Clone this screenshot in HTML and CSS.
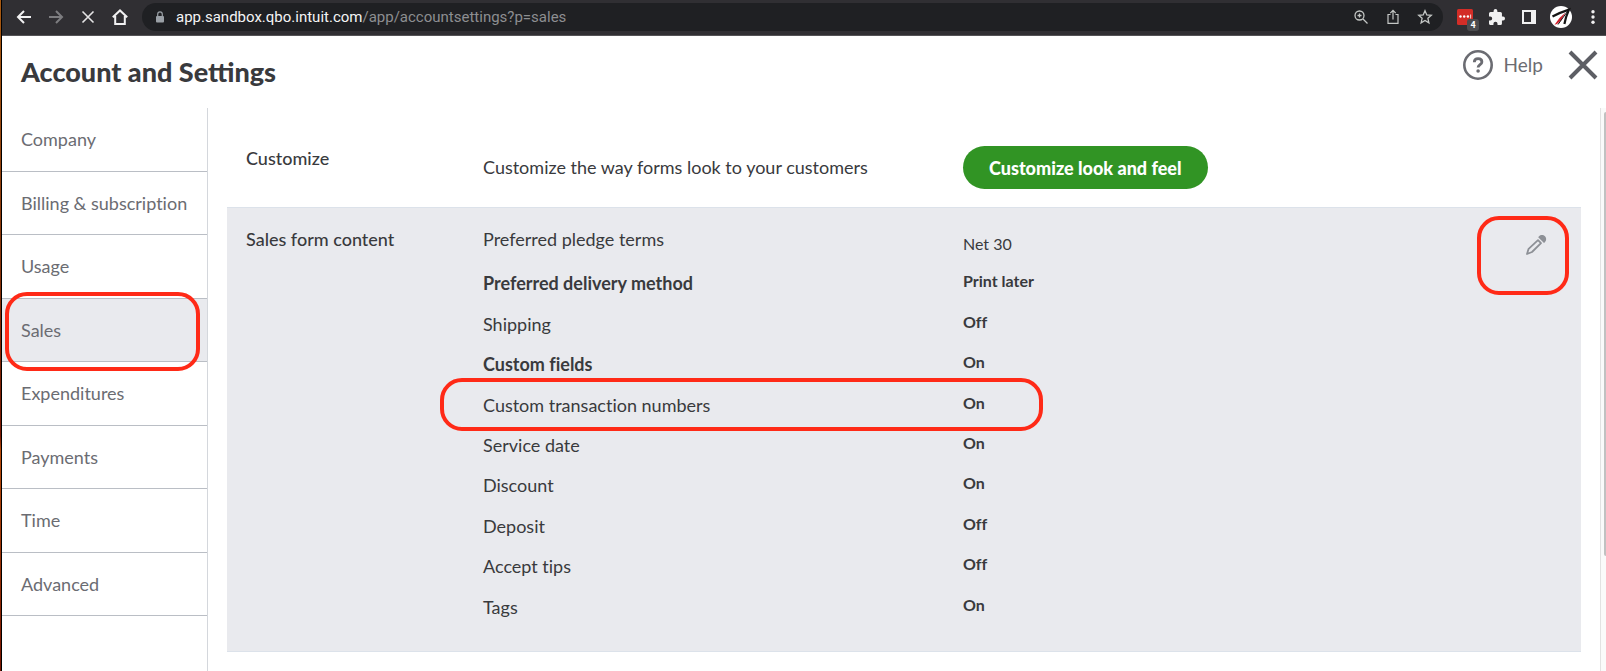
FILE: index.html
```html
<!DOCTYPE html>
<html lang="en">
<head>
<meta charset="utf-8">
<title>Account and Settings</title>
<link rel="stylesheet" href="styles.css">
</head>
<body>
<div class="window">
  <div class="toolbar">
    <div class="nav-buttons">
      <button class="tool" aria-label="Back"><svg width="16" height="16" viewBox="0 0 16 16" stroke="#f1f1f2"><path d="M15 8H2M8 2 2 8l6 6"/></svg></button>
      <button class="tool" aria-label="Forward"><svg width="16" height="16" viewBox="0 0 16 16" stroke="#7d7d80"><path d="M1 8h13M8 2l6 6-6 6"/></svg></button>
      <button class="tool" aria-label="Stop loading"><svg width="16" height="16" viewBox="0 0 16 16" stroke="#e4e4e5" stroke-width="1.600"><path d="m2.500 2.500 11 11M13.500 2.500l-11 11"/></svg></button>
      <button class="tool" aria-label="Home"><svg width="16" height="16" viewBox="0 0 16 16" stroke="#f1f1f2"><path d="M.8 8.200 8 1.400l7.200 6.800M3.200 7v8h9.600V7"/></svg></button>
    </div>
    <div class="address">
      <svg class="lock" width="10" height="12" viewBox="0 0 10 12"><rect x="1" y="5" width="8" height="6.500" rx="1" fill="#9aa0a6"/><path d="M2.700 5V3.200a2.300 2.300 0 0 1 4.600 0V5" fill="none" stroke="#9aa0a6" stroke-width="1.200"/></svg>
      <span class="url"><span class="host">app.sandbox.qbo.intuit.com</span>/app/accountsettings?p=sales</span>
      <button class="tool" aria-label="Zoom"><svg width="16" height="16" viewBox="0 0 16 16" stroke="#c4c7c5"><g stroke-width="1.300"><circle cx="6.500" cy="6.500" r="4.500"/><path d="m10 10 4.500 4.500M4.500 6.500h4M6.500 4.500v4"/></g></svg></button>
      <button class="tool" aria-label="Share"><svg width="16" height="16" viewBox="0 0 16 16" stroke="#c4c7c5"><g stroke-width="1.200"><path d="M5.500 5.500H3V14.400h10V5.500h-2.500M8 10.500V1.500M5.300 4.100 8 1.400l2.700 2.700"/></g></svg></button>
      <button class="tool" aria-label="Bookmark"><svg width="16" height="16" viewBox="0 0 16 16" stroke="#c4c7c5"><path stroke-width="1.300" d="m8 1.700 1.800 4.200 4.500.4-3.400 3 1 4.500L8 11.400l-3.900 2.400 1-4.500-3.400-3 4.500-.4Z"/></svg></button>
    </div>
    <div class="extensions">
      <button class="tool ext" aria-label="Extension, 4 notifications"><svg width="16" height="16" viewBox="0 0 16 16"><rect width="16" height="16" rx="1.500" fill="#d32d27"/><g fill="#fff"><circle cx="3.500" cy="7.500" r="1.200"/><circle cx="7.200" cy="7.500" r="1.200"/><circle cx="10.900" cy="7.500" r="1.200"/><path d="M13.300 5.500h.8v4h-.8z"/></g></svg><span class="count">4</span></button>
      <button class="tool" aria-label="Extensions"><svg width="16" height="16" viewBox="2 1 21 21"><path fill="#f1f1f2" d="M20.500 11H19V7a2 2 0 0 0-2-2h-4V3.500a2.500 2.500 0 0 0-5 0V5H4a2 2 0 0 0-2 2v3.800h1.500a2.700 2.700 0 0 1 0 5.400H2V20c0 1.100.9 2 2 2h3.800v-1.500a2.700 2.700 0 0 1 5.400 0V22H17a2 2 0 0 0 2-2v-4h1.500a2.500 2.500 0 0 0 0-5z"/></svg></button>
      <button class="tool" aria-label="Side panel"><svg width="16" height="16" viewBox="0 0 16 16"><path fill="#f1f1f2" fill-rule="evenodd" d="M1 1h14v14H1zM3 3v10h7V3z"/></svg></button>
      <button class="tool" aria-label="Profile"><svg width="22" height="22" viewBox="0 0 22 22"><circle cx="11" cy="11" r="11" fill="#fff"/><path fill="none" stroke="#151515" stroke-width="2.200" d="M2.500 10.500C8 7.500 13 5.500 19 3.600c-2.300 5-3.800 10-4.600 14.400"/><path fill="#d0202c" d="M15.500 6.500 9.500 12 4.500 18.800l2.500-.8 4-3.500z"/><path stroke="#151515" stroke-width="1" d="M18.500 4 8 18.500"/></svg></button>
      <button class="tool" aria-label="Menu"><svg width="4" height="16" viewBox="0 0 4 16"><g fill="#f1f1f2"><circle cx="2" cy="2.800" r="1.700"/><circle cx="2" cy="8" r="1.700"/><circle cx="2" cy="13.200" r="1.700"/></g></svg></button>
    </div>
  </div>

  <header class="header">
    <h1>Account and Settings</h1>
    <div class="actions">
      <button class="help"><svg width="30" height="30" viewBox="0 0 30 30"><circle cx="15" cy="15" r="13.700" stroke="#6b6c72" stroke-width="2.600" fill="none"/><path d="M11.300 12.200c0-2.200 1.600-3.500 3.800-3.500s3.800 1.300 3.800 3.200c0 2.700-3.800 2.900-3.800 5.700" stroke="#6b6c72" stroke-width="2.800" fill="none"/><circle cx="15.100" cy="21" r="1.800" fill="#6b6c72"/></svg>Help</button>
      <button class="close" aria-label="Close"><svg width="30" height="30" viewBox="0 0 30 30"><path d="m2 2 26 26M28 2 2 28" stroke="#5d5e64" stroke-width="4"/></svg></button>
    </div>
  </header>

  <div class="body">
    <nav class="sidebar">
      <div class="links">
        <a href="#company">Company</a>
        <a href="#billing">Billing &amp; subscription</a>
        <a href="#usage">Usage</a>
        <a href="#sales" class="active" aria-current="page">Sales<span class="mark mark-sales"></span></a>
        <a href="#expenditures">Expenditures</a>
        <a href="#payments">Payments</a>
        <a href="#time">Time</a>
        <a href="#advanced">Advanced</a>
      </div>
    </nav>
    <main class="content">
      <section class="section customize">
        <h2>Customize</h2>
        <p class="description">Customize the way forms look to your customers</p>
        <div><button class="primary">Customize look and feel</button></div>
      </section>
      <section class="section form-content">
        <h2>Sales form content</h2>
        <dl class="settings">
          <div class="first"><dt>Preferred pledge terms</dt><dd>Net 30</dd></div>
          <div class="strong"><dt>Preferred delivery method</dt><dd>Print later</dd></div>
          <div><dt>Shipping</dt><dd>Off</dd></div>
          <div class="strong"><dt>Custom fields</dt><dd>On</dd></div>
          <div><dt>Custom transaction numbers</dt><dd>On</dd><span class="mark mark-row"></span></div>
          <div><dt>Service date</dt><dd>On</dd></div>
          <div><dt>Discount</dt><dd>On</dd></div>
          <div><dt>Deposit</dt><dd>Off</dd></div>
          <div><dt>Accept tips</dt><dd>Off</dd></div>
          <div><dt>Tags</dt><dd>On</dd></div>
        </dl>
        <button class="edit" aria-label="Edit sales form content"><svg width="22" height="22" viewBox="0 0 22 22"><path d="m13 6.200 3 3L7 18l-5 2 1.600-5.200z" fill="none" stroke="#8d9096" stroke-width="1.800" stroke-linejoin="round"/><path d="M13.200 3.200c2-3 5.200-2.500 6.800-.9s1.800 4.800-1 6.700z" fill="#8d9096"/></svg><span class="mark mark-edit"></span></button>
      </section>
    </main>
    <div class="scrollbar"><div class="thumb"></div></div>
  </div>
</div>
</body>
</html>
```

FILE: styles.css
```css
* { box-sizing: border-box; }
body {
  margin: 0;
  font-family: Lato, "Open Sans", sans-serif;
  font-size: 18px;
  color: #393a3d;
  background: linear-gradient(90deg, transparent 1px, #000 1px 2px, transparent 2px), linear-gradient(#a85a12, #8a3608 35%, #7a1802 65%, #b84a08 67%, #781500);
}
h1, h2, p, dl, dd { margin: 0; }
button { border: 0; padding: 0; background: none; font: inherit; color: inherit; }
svg { display: block; }

.window {
  display: flex;
  flex-direction: column;
  height: 100vh;
  margin-left: 2px;
  overflow: hidden;
  background: #fff;
}

.toolbar {
  display: flex;
  align-items: center;
  flex: none;
  height: 36px;
  padding: 0 2px 2px 14px;
  background: #302f33;
  border-bottom: 1px solid #545356;
}
.tool { fill: none; stroke-width: 2; }
.nav-buttons { display: flex; gap: 16px; margin-right: 14px; }
.address {
  display: flex;
  align-items: center;
  flex: 1;
  gap: 16px;
  height: 28px;
  padding: 0 10px 0 13px;
  border-radius: 14px;
  background: #1f2023;
}
.lock { margin-right: -5px; }
.url { flex: 1; font-family: Roboto, sans-serif; font-size: 15px; color: #8d8e91; }
.host { color: #f4f4f5; }
.extensions { display: flex; align-items: center; gap: 10px; margin-left: 11px; }
.extensions .tool { display: flex; justify-content: center; width: 22px; }
.ext { position: relative; }
.count {
  position: absolute;
  left: 13px;
  top: 10px;
  width: 12px;
  border-radius: 3px;
  background: #4b4c4f;
  color: #fff;
  font: bold 9px/12px Roboto, sans-serif;
  text-align: center;
}

.header {
  display: flex;
  justify-content: space-between;
  flex: none;
  height: 72px;
  padding: 14px 8px 0 19px;
}
h1 { font-size: 27px; line-height: 44px; font-weight: 900; }
.actions { display: flex; align-items: center; gap: 25px; height: 30px; }
.help { display: flex; align-items: center; gap: 11px; font-size: 19px; line-height: 28px; color: #6b6c72; }

.body { display: flex; flex: 1; min-height: 0; font-variant-ligatures: none; }
.sidebar { flex: none; width: 206px; border-right: 1px solid #d4d7dc; }
.links { display: grid; grid-auto-rows: 1fr; height: 508px; }
.links a {
  position: relative;
  display: flex;
  align-items: center;
  padding-left: 19px;
  border-bottom: 1px solid #babec5;
  color: #6b6c72;
  text-decoration: none;
}
.links .active { background: #e9eaee; }

.content { flex: 1; padding: 0 19px; }
.section {
  position: relative;
  display: grid;
  grid-template-columns: 237px 480px 1fr;
  padding-left: 19px;
}
h2 { font-size: 18px; line-height: 24px; font-weight: 500; }
.customize { height: 99px; padding-top: 38px; }
.description { line-height: 43px; }
.primary {
  height: 43px;
  padding: 0 26px;
  border-radius: 22px;
  background: #319424;
  color: #fff;
  font-weight: 900;
}
.form-content {
  height: 445px;
  padding-top: 19px;
  background: #e9eaee;
  border: solid #dce2ea;
  border-width: 1px 0;
}
.settings {
  grid-column: 2 / -1;
  display: grid;
  grid-template-rows: 36px;
  grid-auto-rows: 1fr;
  height: 400px;
}
.settings > div { position: relative; display: grid; grid-template-columns: 480px 1fr; line-height: 24px; align-items: center; }
.settings dd { padding-bottom: 4px; font-size: 16px; font-weight: bold; }
.settings .first { align-items: start; }
.settings .first dd { padding-top: 5px; font-weight: 400; }
.strong dt { font-weight: bold; }
.edit { position: absolute; right: 34px; top: 26px; }

.scrollbar { flex: none; width: 6px; padding: 4px 0 0 3px; border-left: 1px solid #e2e2e2; background: #fafafa; }
.thumb { height: 444px; background: #c1c1c1; border-radius: 3px 0 0 3px; }

.mark { position: absolute; border: 4px solid #ff2a17; border-radius: 22px; z-index: 1; }
.mark-sales { left: 3px; top: -7px; width: 195px; height: 79px; }
.mark-row { left: -43px; top: -6px; width: 603px; height: 53px; }
.mark-edit { left: -48px; top: -18px; width: 92px; height: 79px; }
```
